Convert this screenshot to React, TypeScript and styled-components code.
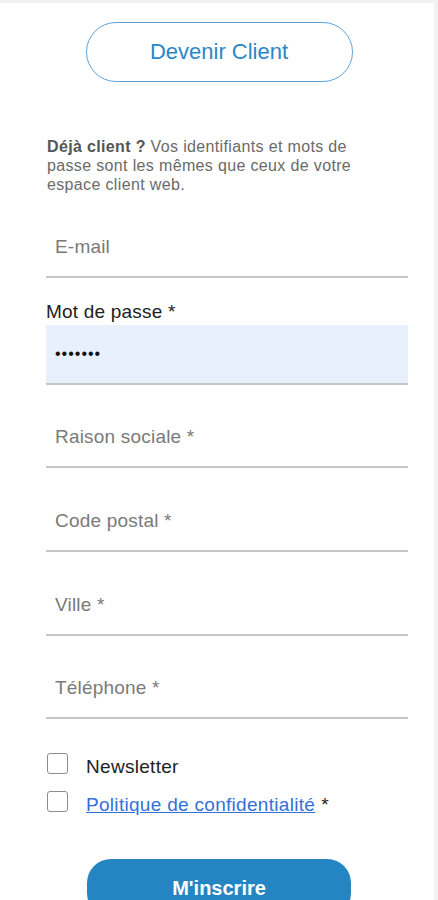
import React from "react";
import styled, { createGlobalStyle } from "styled-components";

const Global = createGlobalStyle`
  html, body { margin: 0; padding: 0; }
  body {
    background: #f2f2f2;
    font-family: "Liberation Sans", Arial, sans-serif;
  }
  * { box-sizing: border-box; }
`;

const Page = styled.div`
  width: 434px;
  min-height: 897px;
  margin-top: 3px;
  background: #ffffff;
  display: flex;
  flex-direction: column;
  padding: 19px 26px 0 46px;
`;

const CenterRow = styled.div<{ $top?: number }>`
  display: flex;
  justify-content: center;
  margin-top: ${(p) => p.$top ?? 0}px;
`;

const OutlineButton = styled.button`
  width: 267px;
  height: 60px;
  border-radius: 30px;
  border: 1px solid #5fa3d7;
  background: #fff;
  color: #2b87c6;
  font-family: "Liberation Sans", Arial, sans-serif;
  font-size: 22px;
  cursor: pointer;
  margin-left: -16px;
`;

const Intro = styled.p`
  margin: 55px 0 0 1px;
  max-width: 330px;
  font-size: 16px;
  letter-spacing: 0.35px;
  line-height: 19px;
  color: #6a6a6a;
  b { color: #555; }
`;

const Field = styled.div<{ $top: number }>`
  display: flex;
  flex-direction: column;
  margin-top: ${(p) => p.$top}px;
`;

const Label = styled.label`
  font-size: 19px;
  letter-spacing: 0.2px;
  line-height: 19px;
  color: #222;
  margin-bottom: 4px;
`;

const Input = styled.input<{ $filled?: boolean }>`
  width: 100%;
  height: 60px;
  border: none;
  border-bottom: 2px solid #c6c6c6;
  background: ${(p) => (p.$filled ? "#e8f0fe" : "#fff")};
  padding: 0 9px;
  font-family: "Liberation Sans", Arial, sans-serif;
  font-size: ${(p) => (p.$filled ? "16px" : "19px")};
  letter-spacing: ${(p) => (p.$filled ? "1px" : "0.2px")};
  color: #111;
  outline: none;
  &::placeholder { color: #7a7a7a; }
`;

const Checks = styled.div`
  display: flex;
  flex-direction: column;
  gap: 17px;
  margin-top: 37px;
`;

const CheckRow = styled.label`
  display: flex;
  align-items: center;
  gap: 18px;
  font-size: 19px;
  letter-spacing: 0.3px;
  color: #222;
  height: 21px;
`;

const Box = styled.input`
  appearance: none;
  margin: 0 0 0 1px;
  width: 21px;
  height: 21px;
  border: 1.5px solid #8c8c8c;
  border-radius: 3px;
  background: #fff;
  transform: translateY(-3px);
`;

const TextLine = styled.span`
  display: inline-flex;
  gap: 6px;
  align-items: baseline;
`;

const Link = styled.a`
  color: #3370dc;
  text-decoration: underline;
`;

const PrimaryButton = styled.button`
  width: 264px;
  height: 58px;
  border-radius: 24px;
  border: none;
  background: #2585c2;
  color: #fff;
  font-family: "Liberation Sans", Arial, sans-serif;
  font-size: 20px;
  font-weight: bold;
  margin-left: -16px;
`;

export default function App() {
  return (
    <>
      <Global />
      <Page>
        <CenterRow>
          <OutlineButton>Devenir Client</OutlineButton>
        </CenterRow>
        <Intro>
          <b>Déjà client ?</b> Vos identifiants et mots de passe sont les mêmes que ceux de votre espace client web.
        </Intro>
        <Field $top={24}>
          <Input placeholder="E-mail" />
        </Field>
        <Field $top={24}>
          <Label>Mot de passe *</Label>
          <Input type="password" defaultValue="abcdefg" $filled />
        </Field>
        <Field $top={23}>
          <Input placeholder="Raison sociale *" />
        </Field>
        <Field $top={24}>
          <Input placeholder="Code postal *" />
        </Field>
        <Field $top={24}>
          <Input placeholder="Ville *" />
        </Field>
        <Field $top={23}>
          <Input placeholder="Téléphone *" />
        </Field>
        <Checks>
          <CheckRow>
            <Box type="checkbox" />
            <span>Newsletter</span>
          </CheckRow>
          <CheckRow>
            <Box type="checkbox" />
            <TextLine>
              <Link href="#">Politique de confidentialité</Link>
              <span>*</span>
            </TextLine>
          </CheckRow>
        </Checks>
        <CenterRow $top={44}>
          <PrimaryButton>M'inscrire</PrimaryButton>
        </CenterRow>
      </Page>
    </>
  );
}
